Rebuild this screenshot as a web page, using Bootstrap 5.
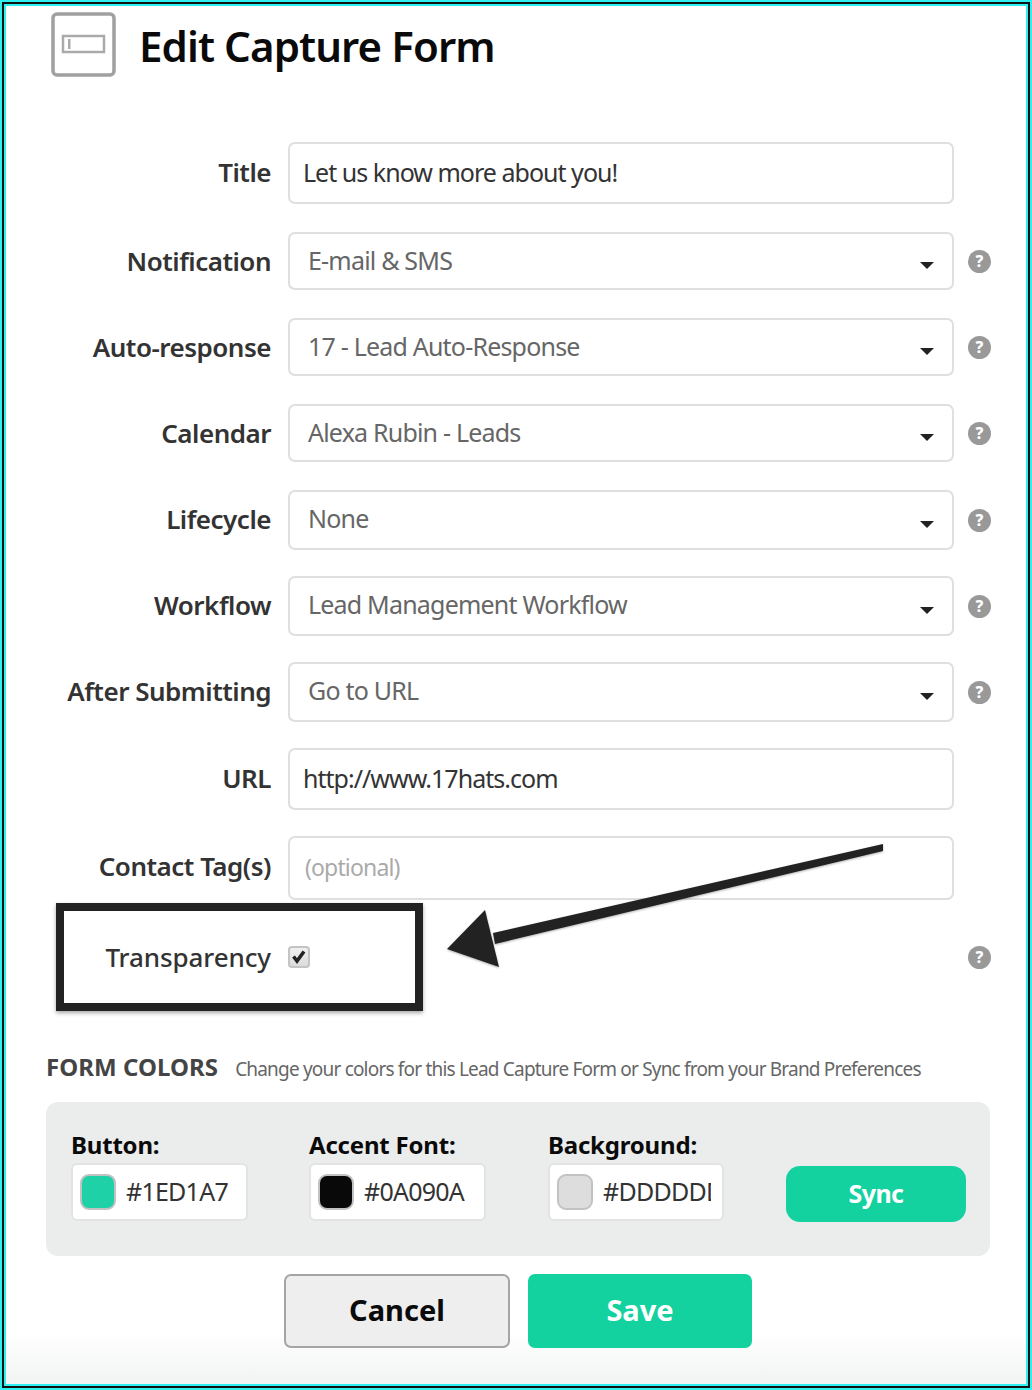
<!DOCTYPE html>
<html lang="en">
<head>
<meta charset="UTF-8">
<meta name="viewport" content="width=device-width, initial-scale=1.0">
<title>Edit Capture Form</title>
<link href="https://cdn.jsdelivr.net/npm/bootstrap@5.3.0/dist/css/bootstrap.min.css" rel="stylesheet">
<style>
html, body { height: 100%; }
body { font-family: "Noto Sans", sans-serif; color: #333; background: #fff; overflow: hidden; }
.frame { position: relative; height: 1390px; border: 2px solid #2ff0f0; box-shadow: inset 0 0 0 2px #111, inset 0 0 0 4px #2ff0f0; padding: 3px; background: linear-gradient(#fff 1330px, #f1f2f2 1386px); }
.page-head { height: 86px; padding-left: 46px; gap: 23px; padding-top: 7px; }
.head-icon { width: 65px; height: 65px; }
.page-head h1 { font-size: 42px; font-weight: 600; color: #0a0a0a; margin: 9px 0 0; letter-spacing: -.9px; }
.field-row { display: flex; align-items: center; margin-top: 26px; }
.row-first { margin-top: 51px; }
.row-wide { margin-top: 28px; }
.row-check { margin-top: 28px; height: 58px; }
.field-label { width: 266px; text-align: right; font-size: 26px; font-weight: 600; color: #333; letter-spacing: -.5px; margin: 0; flex: none; }
.label-up { padding-bottom: 2px; }
.label-up2 { padding-bottom: 4px; }
.label-light { font-weight: 500; letter-spacing: -.1px; }
.field-box { width: 666px; margin-left: 17px; flex: none; border: 2px solid #dfdfdf; border-radius: 7px; background: #fff; font-size: 25px; color: #333; letter-spacing: -.98px; display: flex; align-items: center; padding: 0 13px; height: 62px; }
.field-sel { color: #666; padding: 0 18px; letter-spacing: -.8px; justify-content: space-between; height: 58px; }
.field-sel::after { content: ""; border-left: 7px solid transparent; border-right: 7px solid transparent; border-top: 7px solid #222; margin: 8px 0 0; }
.field-tall { height: 60px; padding-bottom: 2px; }
.field-tall::after { margin-top: 10px; }
.field-hint { color: #aaa; font-size: 23px; letter-spacing: -.85px; padding: 0 0 2px 15px; height: 64px; }
.help-dot { width: 23px; height: 23px; border-radius: 50%; background: #999; color: #fff; font-size: 16px; font-weight: 800; line-height: 23px; text-align: center; margin-left: 14px; flex: none; }
.help-far { position: absolute; left: 966px; top: 944px; margin: 0; }
.check-box { width: 22px; height: 22px; border: 2px solid #c4c4c4; border-radius: 4px; background: linear-gradient(#f0f0f0, #dcdcdc); margin-left: 17px; display: block; }
.callout { position: absolute; left: 54px; top: 901px; width: 367px; height: 108px; border: 8px solid #222; box-shadow: 0 2px 4px rgba(0,0,0,.35); pointer-events: none; }
.arrow-svg { position: absolute; left: 440px; top: 838px; filter: drop-shadow(0 1px 1px rgba(0,0,0,.3)); }
.colors-head { padding-left: 41px; margin-top: 63px; gap: 17px; align-items: baseline; }
.colors-head b { font-size: 24px; font-weight: 700; color: #444; letter-spacing: .05px; }
.colors-head span { font-size: 19px; color: #666; letter-spacing: -.81px; }
.colors-panel { margin: 17px 0 0 41px; width: 944px; height: 154px; background: #ebecec; border-radius: 12px; padding: 26px 24px 0 25px; display: flex; }
.color-item { flex: none; width: 238px; }
.color-accent { width: 239px; }
.color-bg { width: 176px; }
.color-item label { display: block; font-size: 24px; font-weight: 700; color: #0a0a0a; letter-spacing: -.2px; line-height: 34px; margin: 0 0 1px; }
.color-field { width: 177px; height: 58px; border: 2px solid #e3e3e3; border-radius: 6px; background: #fff; display: flex; align-items: center; padding: 0 11px 0 7px; gap: 10px; font-size: 25px; color: #333; letter-spacing: -.75px; white-space: nowrap; }
.color-bg .color-field { width: 176px; }
.color-val { overflow: hidden; flex: 1; }
.swatch { width: 36px; height: 36px; border: 2px solid #c2c2c2; border-radius: 9px; flex: none; }
.sw-teal { background: #1ed1a7; }
.sw-dark { background: #0a090a; }
.sw-light { background: #dddddd; }
.btn-teal { background: #14d1a0; color: #fff; border: 0; font-weight: 700; }
.btn-teal:hover { background: #14d1a0; color: #fff; }
.sync-btn { width: 180px; height: 56px; border-radius: 14px; font-size: 25px; letter-spacing: -.6px; margin: 38px 0 0 auto; padding: 0; }
.form-actions { justify-content: center; gap: 18px; margin-top: 18px; padding-left: 4px; }
.action-btn { height: 74px; border-radius: 7px; font-size: 29px; font-weight: 700; padding: 0 0 2px; }
.btn-cancel { width: 226px; background: #eeeeee; color: #0a0a0a; border: 2px solid #a5a5a5; }
.btn-save { width: 224px; }
</style>
</head>
<body>
<div class="frame">
  <div class="page-head d-flex align-items-start">
    <svg class="head-icon" viewBox="0 0 65 65"><rect x="2" y="2" width="61" height="61" rx="4" fill="#fff" stroke="#a0a0a0" stroke-width="3.5"/><rect x="12" y="24" width="41" height="16" fill="none" stroke="#aaa" stroke-width="2.5"/><rect x="17" y="27" width="2.5" height="10" fill="#aaa"/></svg>
    <h1>Edit Capture Form</h1>
  </div>

  <div class="field-row row-first"><label class="field-label label-up">Title</label><div class="field-box">Let us know more about you!</div></div>
  <div class="field-row row-wide"><label class="field-label">Notification</label><div class="field-box field-sel">E-mail &amp; SMS</div><div class="help-dot">?</div></div>
  <div class="field-row row-wide"><label class="field-label">Auto-response</label><div class="field-box field-sel">17 - Lead Auto-Response</div><div class="help-dot">?</div></div>
  <div class="field-row row-wide"><label class="field-label">Calendar</label><div class="field-box field-sel">Alexa Rubin - Leads</div><div class="help-dot">?</div></div>
  <div class="field-row row-wide"><label class="field-label label-up">Lifecycle</label><div class="field-box field-sel field-tall">None</div><div class="help-dot">?</div></div>
  <div class="field-row"><label class="field-label label-up">Workflow</label><div class="field-box field-sel field-tall">Lead Management Workflow</div><div class="help-dot">?</div></div>
  <div class="field-row"><label class="field-label label-up">After Submitting</label><div class="field-box field-sel field-tall">Go to URL</div><div class="help-dot">?</div></div>
  <div class="field-row"><label class="field-label label-up">URL</label><div class="field-box">http://www.17hats.com</div></div>
  <div class="field-row"><label class="field-label label-up2">Contact Tag(s)</label><div class="field-box field-hint">(optional)</div></div>
  <div class="field-row row-check"><label class="field-label label-light">Transparency</label>
    <svg class="check-box" viewBox="0 0 18 18"><path d="M3.5 8.5l3.5 4.5 7-9.5" fill="none" stroke="#222" stroke-width="3.5"/></svg>
  </div>

  <div class="colors-head d-flex"><b>FORM COLORS</b><span>Change your colors for this Lead Capture Form or Sync from your Brand Preferences</span></div>
  <div class="colors-panel">
    <div class="color-item"><label>Button:</label><div class="color-field"><div class="swatch sw-teal"></div><span class="color-val">#1ED1A7</span></div></div>
    <div class="color-item color-accent"><label>Accent Font:</label><div class="color-field"><div class="swatch sw-dark"></div><span class="color-val">#0A090A</span></div></div>
    <div class="color-item color-bg"><label>Background:</label><div class="color-field"><div class="swatch sw-light"></div><span class="color-val">#DDDDDD</span></div></div>
    <button type="button" class="btn btn-teal sync-btn">Sync</button>
  </div>
  <div class="form-actions d-flex">
    <button type="button" class="btn btn-cancel action-btn">Cancel</button>
    <button type="button" class="btn btn-teal btn-save action-btn">Save</button>
  </div>

  <div class="help-dot help-far">?</div>
  <div class="callout"></div>
  <svg class="arrow-svg" width="450" height="140" viewBox="0 0 450 140"><path d="M441 4L441 11L53 104L51 93Z" fill="#222"/><path d="M5 109L43 70L57 127Z" fill="#222"/></svg>
</div>
<script src="https://cdn.jsdelivr.net/npm/bootstrap@5.3.0/dist/js/bootstrap.bundle.min.js"></script>
</body>
</html>
